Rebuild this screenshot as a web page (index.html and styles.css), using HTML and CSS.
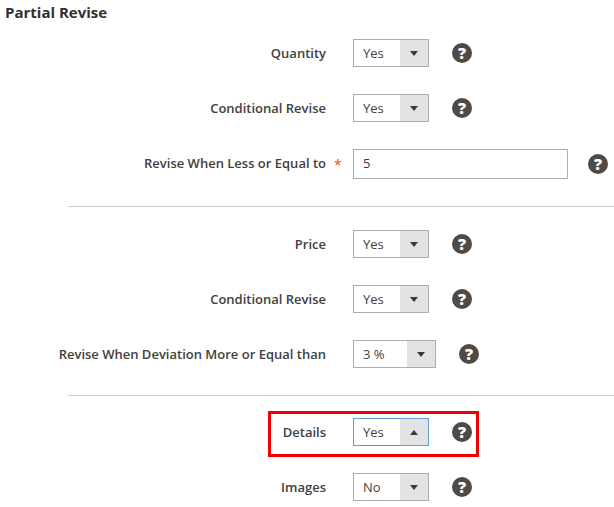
FILE: index.html
```html
<!DOCTYPE html>
<html lang="en">
<head>
<meta charset="utf-8">
<title>Partial Revise</title>
<link rel="stylesheet" href="styles.css">
</head>
<body>
<h2 class="title">Partial Revise</h2>
<section class="group group-first">
  <div class="row"><span class="label">Quantity</span><span class="mark"></span><div class="select"><span class="value">Yes</span><span class="toggle"><i class="arrow"></i></span></div><span class="help">?</span></div>
  <div class="row"><span class="label">Conditional Revise</span><span class="mark"></span><div class="select"><span class="value">Yes</span><span class="toggle"><i class="arrow"></i></span></div><span class="help">?</span></div>
  <div class="row row-input"><span class="label">Revise When Less or Equal to</span><span class="mark">*</span><div class="input">5</div><span class="help">?</span></div>
</section>
<hr class="rule">
<section class="group">
  <div class="row"><span class="label">Price</span><span class="mark"></span><div class="select"><span class="value">Yes</span><span class="toggle"><i class="arrow"></i></span></div><span class="help">?</span></div>
  <div class="row"><span class="label">Conditional Revise</span><span class="mark"></span><div class="select"><span class="value">Yes</span><span class="toggle"><i class="arrow"></i></span></div><span class="help">?</span></div>
  <div class="row"><span class="label">Revise When Deviation More or Equal than</span><span class="mark"></span><div class="select select-wide"><span class="value">3 %</span><span class="toggle"><i class="arrow"></i></span></div><span class="help">?</span></div>
</section>
<hr class="rule rule-tight">
<section class="group">
  <div class="row"><span class="highlight"></span><span class="label">Details</span><span class="mark"></span><div class="select select-open"><span class="value">Yes</span><span class="toggle"><i class="arrow arrow-up"></i></span></div><span class="help">?</span></div>
  <div class="row"><span class="label">Images</span><span class="mark"></span><div class="select"><span class="value">No</span><span class="toggle"><i class="arrow"></i></span></div><span class="help">?</span></div>
</section>
</body>
</html>
```
FILE: styles.css
```css
html, body {
  margin: 0;
  padding: 0;
  background: #fff;
  overflow: hidden;
}
body {
  width: 614px;
  height: 507px;
  font-family: "Open Sans", "Liberation Sans", sans-serif;
  color: #41362f;
}
.title {
  margin: 0;
  padding: 2px 0 1px 5px;
  font-size: 15px;
  line-height: 20px;
  font-weight: 700;
  color: #303030;
}
.group {
  display: flex;
  flex-direction: column;
  gap: 27px;
}
.group-first {
  padding-top: 16px;
}
.row {
  position: relative;
  display: flex;
  align-items: center;
  height: 28px;
}
.row-input {
  height: 30px;
}
.row-input .label {
  margin-bottom: 2px;
}
.label {
  width: 326px;
  flex: none;
  text-align: right;
  font-size: 13px;
  font-weight: 600;
  line-height: 18px;
  white-space: nowrap;
  color: #41403e;
}
.mark {
  width: 27px;
  flex: none;
  padding-left: 8px;
  box-sizing: border-box;
  font-size: 14px;
  font-weight: 400;
  color: #eb5202;
}
.select {
  width: 76px;
  height: 28px;
  flex: none;
  box-sizing: border-box;
  display: flex;
  border: 1px solid #adadad;
  background: #fff;
}
.select-wide {
  width: 83px;
}
.select-open {
  border-color: #5a9dd8;
}
.value {
  flex: 1;
  padding-left: 9px;
  font-size: 13px;
  line-height: 27px;
  color: #41403e;
}
.toggle {
  width: 28px;
  flex: none;
  display: flex;
  align-items: center;
  justify-content: center;
  background: #e3e3e3;
}
.arrow {
  width: 0;
  height: 0;
  border-left: 4px solid transparent;
  border-right: 4px solid transparent;
  border-top: 5px solid #41362f;
}
.arrow-up {
  border-top: 0;
  border-bottom: 5px solid #41362f;
}
.help {
  width: 20px;
  height: 20px;
  flex: none;
  margin-left: 23px;
  border-radius: 50%;
  background: #514943;
  color: #fff;
  font-size: 16px;
  font-weight: 800;
  line-height: 20px;
  text-align: center;
}
.input {
  width: 215px;
  height: 30px;
  flex: none;
  box-sizing: border-box;
  border: 1px solid #adadad;
  padding-left: 9px;
  font-size: 13px;
  line-height: 27px;
  background: #fff;
}
.row-input .help {
  margin-left: 20px;
}
.rule {
  margin: 27px 0 23px 68px;
  height: 1px;
  border: 0;
  background: #cccccc;
}
.rule-tight {
  margin-bottom: 22px;
}
.highlight {
  position: absolute;
  left: 268px;
  top: -7px;
  width: 211px;
  height: 46px;
  box-sizing: border-box;
  border: 3px solid #f00000;
}
```
